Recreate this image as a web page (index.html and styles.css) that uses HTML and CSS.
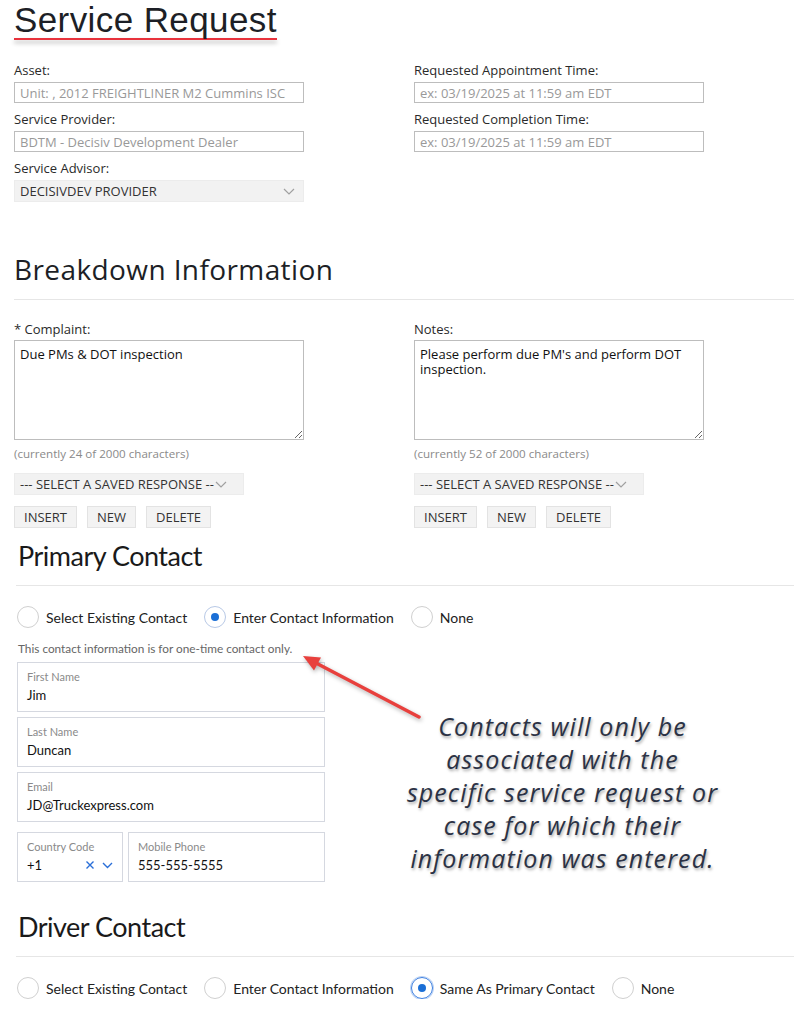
FILE: index.html
```html
<!DOCTYPE html>
<html lang="en">
<head>
  <meta charset="UTF-8" />
  <meta name="viewport" content="width=device-width, initial-scale=1.0"/>
  <title>Service Request</title>
  <link rel="stylesheet" href="styles.css">
</head>
<body>
  <div class="page">
    <h1 class="title">Service Request</h1>

    <!-- asset / provider / times -->
    <div class="form-grid">
      <div class="col">
        <div class="field">
          <label>Asset:</label>
          <input type="text" class="box readonly" value="Unit: , 2012 FREIGHTLINER M2 Cummins ISC" readonly>
        </div>
        <div class="field">
          <label>Service Provider:</label>
          <input type="text" class="box readonly" value="BDTM - Decisiv Development Dealer" readonly>
        </div>
        <div class="field">
          <label>Service Advisor:</label>
          <div class="select wide">
            <span>DECISIVDEV PROVIDER</span>
            <svg class="chev" width="12" height="7" viewBox="0 0 12 7"><path d="M1 1l5 5 5-5" fill="none" stroke="#a0a0a0" stroke-width="1.2"/></svg>
          </div>
        </div>
      </div>
      <div class="col">
        <div class="field">
          <label>Requested Appointment Time:</label>
          <input type="text" class="box" placeholder="ex: 03/19/2025 at 11:59 am EDT">
        </div>
        <div class="field">
          <label>Requested Completion Time:</label>
          <input type="text" class="box" placeholder="ex: 03/19/2025 at 11:59 am EDT">
        </div>
      </div>
    </div>

    <h2 class="section-title">Breakdown Information</h2>

    <div class="form-grid breakdown">
      <div class="col">
        <label>* Complaint:</label>
        <textarea class="area">Due PMs &amp; DOT inspection</textarea>
        <div class="counter">(currently 24 of 2000 characters)</div>
        <div class="select saved">
          <span>--- SELECT A SAVED RESPONSE --</span>
          <svg class="chev" width="12" height="7" viewBox="0 0 12 7"><path d="M1 1l5 5 5-5" fill="none" stroke="#a0a0a0" stroke-width="1.2"/></svg>
        </div>
        <div class="btn-row">
          <button class="btn">INSERT</button>
          <button class="btn">NEW</button>
          <button class="btn">DELETE</button>
        </div>
      </div>
      <div class="col">
        <label>Notes:</label>
        <textarea class="area">Please perform due PM's and perform DOT inspection.</textarea>
        <div class="counter">(currently 52 of 2000 characters)</div>
        <div class="select saved">
          <span>--- SELECT A SAVED RESPONSE --</span>
          <svg class="chev" width="12" height="7" viewBox="0 0 12 7"><path d="M1 1l5 5 5-5" fill="none" stroke="#a0a0a0" stroke-width="1.2"/></svg>
        </div>
        <div class="btn-row">
          <button class="btn">INSERT</button>
          <button class="btn">NEW</button>
          <button class="btn">DELETE</button>
        </div>
      </div>
    </div>

    <!-- primary contact -->
    <div class="contact">
      <h2 class="contact-title">Primary Contact</h2>
      <div class="radios">
        <div class="radio"><span class="dot"></span>Select Existing Contact</div>
        <div class="radio on"><span class="dot"></span>Enter Contact Information</div>
        <div class="radio"><span class="dot"></span>None</div>
      </div>
      <p class="note">This contact information is for one-time contact only.</p>

      <div class="contact-body">
        <div class="fields">
          <div class="cbox">
            <div class="clabel">First Name</div>
            <div class="cvalue">Jim</div>
          </div>
          <div class="cbox">
            <div class="clabel">Last Name</div>
            <div class="cvalue">Duncan</div>
          </div>
          <div class="cbox">
            <div class="clabel">Email</div>
            <div class="cvalue">JD@Truckexpress.com</div>
          </div>
          <div class="phone-row">
            <div class="cbox country">
              <div class="clabel">Country Code</div>
              <div class="cvalue">
                <span>+1</span>
                <span class="icons">
                  <svg width="10" height="10" viewBox="0 0 10 10"><path d="M1.5 1.5l7 7M8.5 1.5l-7 7" stroke="#2a6fd8" stroke-width="1.4"/></svg>
                  <svg width="11" height="7" viewBox="0 0 11 7"><path d="M1 1l4.5 4.5L10 1" fill="none" stroke="#2a6fd8" stroke-width="1.4"/></svg>
                </span>
              </div>
            </div>
            <div class="cbox mobile">
              <div class="clabel">Mobile Phone</div>
              <div class="cvalue">555-555-5555</div>
            </div>
          </div>
        </div>
        <div class="callout">
          Contacts will only be<br>
          associated with the<br>
          specific service request or<br>
          case for which their<br>
          information was entered.
        </div>
      </div>
    </div>

    <!-- driver contact -->
    <div class="contact driver">
      <h2 class="contact-title">Driver Contact</h2>
      <div class="radios">
        <div class="radio"><span class="dot"></span>Select Existing Contact</div>
        <div class="radio"><span class="dot"></span>Enter Contact Information</div>
        <div class="radio on strong"><span class="dot"></span>Same As Primary Contact</div>
        <div class="radio"><span class="dot"></span>None</div>
      </div>
    </div>

    <!-- annotation arrow -->
    <svg class="arrow" width="130" height="75" viewBox="0 0 130 75">
      <line x1="121" y1="67" x2="18" y2="13" stroke="#e8403d" stroke-width="3.5" stroke-linecap="round"/>
      <polygon points="5,6 23,7.5 16,20.5" fill="#e8403d"/>
    </svg>
  </div>
</body>
</html>
```

FILE: styles.css
```css
body {
  margin: 0;
  font-family: "Open Sans", Arial, sans-serif;
  color: #222;
  background: #fff;
}

.page {
  position: relative;
  padding-left: 14px;
}

.title {
  display: inline-block;
  margin: 0;
  font-family: "Liberation Sans", Arial, sans-serif;
  font-size: 35px;
  font-weight: 400;
  line-height: 39px;
  letter-spacing: 0.4px;
  color: #1d1f26;
}

.title::after {
  content: "";
  display: block;
  height: 2px;
  margin-top: -1px;
  background: #e8323c;
  box-shadow: 0 3px 4px rgba(0, 0, 0, 0.3);
}

.form-grid {
  display: grid;
  grid-template-columns: 400px 380px;
  margin-top: 22px;
}

.col {
  display: flex;
  flex-direction: column;
  gap: 8px;
}

label {
  display: block;
  font-size: 13px;
  line-height: 16px;
  color: #2a2a2a;
}

.field label {
  margin-bottom: 4px;
}

.box {
  display: block;
  box-sizing: border-box;
  width: 290px;
  height: 21px;
  margin: 0;
  padding: 0 5px;
  border: 1px solid #bdbdbd;
  font-family: inherit;
  font-size: 13px;
  color: #999;
  outline: none;
}

.box::placeholder {
  color: #999;
}

.select {
  display: flex;
  align-items: center;
  box-sizing: border-box;
  height: 22px;
  padding: 0 6px 0 5px;
  background: #f2f2f2;
  border: 1px solid #ececec;
  font-size: 13px;
  color: #333;
}

.select.wide {
  width: 290px;
  justify-content: space-between;
  padding-right: 8px;
}

.section-title {
  margin: 50px 0 0;
  padding-bottom: 13px;
  border-bottom: 1px solid #e6e6e6;
  font-size: 28px;
  font-weight: 400;
  line-height: 34px;
  letter-spacing: 0.4px;
  color: #1d1f26;
}

.breakdown {
  margin-top: 21px;
}

.breakdown .col {
  gap: 0;
}

.breakdown label {
  margin-bottom: 3px;
}

.area {
  display: block;
  box-sizing: border-box;
  width: 290px;
  height: 100px;
  margin: 0;
  padding: 6px 5px;
  border: 1px solid #bdbdbd;
  font-family: inherit;
  font-size: 13px;
  line-height: 15px;
  color: #111;
  outline: none;
}

.counter {
  margin-top: 7px;
  font-size: 11.6px;
  line-height: 14px;
  color: #8a8a8a;
}

.select.saved {
  width: 230px;
  margin-top: 12px;
  gap: 1px;
}

.btn-row {
  display: flex;
  gap: 10px;
  margin-top: 11px;
}

.btn {
  box-sizing: border-box;
  height: 22px;
  padding: 0 9px;
  background: #f3f3f3;
  border: 1px solid #e3e3e3;
  font-family: inherit;
  font-size: 13px;
  color: #333;
}

/* contact sections */
.contact {
  margin-top: 12px;
  margin-left: 2px;
  font-family: Lato, "Open Sans", sans-serif;
}

.contact-title {
  margin: 0;
  padding: 0 0 13px 2px;
  border-bottom: 1px solid #e6e6e6;
  font-size: 27px;
  font-weight: 400;
  line-height: 32px;
  letter-spacing: -0.5px;
  color: #1a1a1a;
}

.radios {
  display: flex;
  gap: 17px;
  margin-top: 20px;
  padding-left: 1px;
}

.radio {
  display: flex;
  align-items: center;
  gap: 7px;
  height: 22px;
  font-size: 14px;
  color: #222;
}

.dot {
  position: relative;
  box-sizing: border-box;
  width: 22px;
  height: 22px;
  border: 1px solid #d0d0d0;
  border-radius: 50%;
}

.radio.on .dot {
  border-color: #b8c9e6;
}

.radio.on .dot::after {
  content: "";
  position: absolute;
  left: 6px;
  top: 6px;
  width: 8px;
  height: 8px;
  border-radius: 50%;
  background: #1b6fd6;
}

.radio.strong .dot {
  border-color: #3d7fe0;
  box-shadow: 0 0 0 1px rgba(61, 127, 224, 0.35);
}

.note {
  margin: 14px 0 0 2px;
  font-size: 11.8px;
  line-height: 14px;
  color: #666;
}

.contact-body {
  display: flex;
  margin-top: 6px;
}

.fields {
  display: flex;
  flex-direction: column;
  gap: 5px;
  width: 308px;
  margin-left: 1px;
}

.cbox {
  box-sizing: border-box;
  height: 50px;
  padding: 7px 9px 0;
  border: 1px solid #d5d8e0;
}

.clabel {
  font-size: 11px;
  line-height: 14px;
  color: #8a8a8a;
}

.cvalue {
  margin-top: 3px;
  font-size: 13px;
  line-height: 16px;
  color: #111;
}

.phone-row {
  display: flex;
  gap: 5px;
  margin-top: 5px;
}

.country {
  width: 106px;
}

.country .cvalue {
  display: flex;
  justify-content: space-between;
  align-items: center;
}

.icons {
  display: flex;
  align-items: center;
  gap: 7px;
}

.mobile {
  flex: 1;
}

.callout {
  flex: 1;
  margin-top: 48px;
  padding-left: 6px;
  text-align: center;
  font-family: "Open Sans", Arial, sans-serif;
  font-style: italic;
  font-size: 25px;
  line-height: 33px;
  letter-spacing: 1.1px;
  color: #2b3245;
  text-shadow: 1px 2px 3px rgba(0, 0, 0, 0.35);
}

.driver {
  margin-top: 29px;
}

.arrow {
  position: absolute;
  left: 298px;
  top: 650px;
  filter: drop-shadow(1px 2px 2px rgba(0, 0, 0, 0.3));
}
```
